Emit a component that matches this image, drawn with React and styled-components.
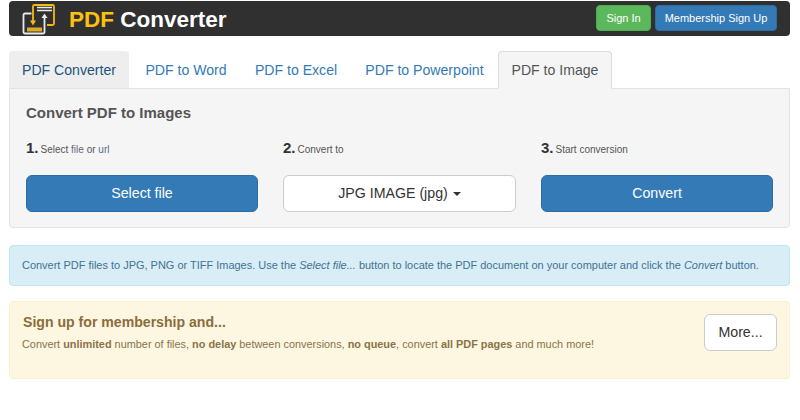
import React from "react";
import styled, { createGlobalStyle } from "styled-components";

const Global = createGlobalStyle`
  html, body { margin: 0; padding: 0; background: #fff; }
  body { font-family: "Liberation Sans", Arial, sans-serif; color: #333; }
  * { box-sizing: border-box; }
`;

const Page = styled.div`
  width: 800px;
  height: 420px;
  padding: 1px 10px 0 9px;
  overflow: hidden;
`;

const Header = styled.header`
  height: 35px;
  background: #303030;
  border-radius: 4px;
  display: flex;
  align-items: flex-start;
  justify-content: space-between;
  padding: 4px 13px 0 13px;
`;

const Brand = styled.div`
  display: flex;
  align-items: center;
  gap: 13px;
  height: 29px;
  font-size: 22.5px;
  font-weight: 700;
  color: #fff;
`;

const Accent = styled.span`
  color: #fdc010;
`;

const HeaderActions = styled.div`
  display: flex;
  gap: 4px;
`;

const HeaderButton = styled.button`
  height: 26px;
  width: ${(p) => p.$width}px;
  border-radius: 4px;
  border: 1px solid ${(p) => (p.$green ? "#4cae4c" : "#2e6da4")};
  background: ${(p) => (p.$green ? "#5cb85c" : "#337ab7")};
  color: #fff;
  font: 11px "Liberation Sans", Arial, sans-serif;
  padding: 0;
`;

const Tabs = styled.nav`
  display: flex;
  margin-top: 15px;
  height: 38px;
`;

const Tab = styled.a`
  height: ${(p) => (p.$active ? 38 : 37)}px;
  width: ${(p) => p.$width}px;
  margin-right: ${(p) => p.$gap}px;
  display: flex;
  align-items: center;
  justify-content: center;
  font-size: 14.1px;
  border-radius: 4px 4px 0 0;
  position: relative;
  z-index: 1;
  color: ${(p) => (p.$home ? "#23527c" : p.$active ? "#555" : "#337ab7")};
  background: ${(p) => (p.$home ? "#eee" : p.$active ? "#f5f5f5" : "transparent")};
  border: 1px solid ${(p) => (p.$active ? "#ddd" : "transparent")};
  border-bottom: ${(p) => (p.$active ? "1px solid #f5f5f5" : "none")};
`;

const Panel = styled.section`
  height: 140px;
  background: #f5f5f5;
  border: 1px solid #e3e3e3;
  border-radius: 0 0 4px 4px;
  margin-top: -1px;
  padding: 15px 16px 0;
`;

const PanelTitle = styled.h2`
  margin: 0;
  font-size: 15px;
  line-height: 18px;
  font-weight: 700;
  color: #555;
`;

const Steps = styled.div`
  display: grid;
  grid-template-columns: 232px 233px 232px;
  column-gap: 25px;
  margin-top: 17px;
`;

const Step = styled.div`
  display: flex;
  flex-direction: column;
`;

const StepLabel = styled.div`
  height: 22px;
  display: flex;
  align-items: baseline;
  font-size: 10px;
  color: #555;
  white-space: pre;
`;

const StepNum = styled.b`
  font-size: 15px;
  color: #333;
  margin-right: 2px;
`;

const LinkWord = styled.span`
  color: #5a6b82;
`;

const ActionButton = styled.button`
  margin-top: 14px;
  height: 37px;
  width: 100%;
  border-radius: 6px;
  border: 1px solid ${(p) => (p.$plain ? "#ccc" : "#2e6da4")};
  background: ${(p) => (p.$plain ? "#fff" : "#337ab7")};
  color: ${(p) => (p.$plain ? "#333" : "#fff")};
  font: 14.2px "Liberation Sans", Arial, sans-serif;
  padding: 0 0 2px;
`;

const Caret = styled.span`
  display: inline-block;
  margin-left: 5px;
  vertical-align: middle;
  border-top: 4px solid #333;
  border-left: 4px solid transparent;
  border-right: 4px solid transparent;
`;

const Info = styled.div`
  margin-top: 17px;
  height: 41px;
  background: #d9edf7;
  border: 1px solid #bce8f1;
  border-radius: 4px;
  color: #3f7390;
  font-size: 10.98px;
  line-height: 38px;
  padding: 0 0 0 12px;
  white-space: nowrap;
`;

const Promo = styled.div`
  margin-top: 15px;
  height: 78px;
  background: #fdf7e2;
  border: 1px solid #faf0d4;
  border-radius: 4px;
  color: #8a7348;
  display: flex;
  justify-content: space-between;
  align-items: flex-start;
  padding: 12px 12px 0 12px;
`;

const PromoText = styled.div`
  display: flex;
  flex-direction: column;
`;

const PromoTitle = styled.h3`
  margin: 0 0 0 1px;
  font-size: 14.1px;
  line-height: 16px;
  font-weight: 700;
  color: #8a6d3b;
`;

const PromoBody = styled.p`
  margin: 7px 0 0;
  font-size: 10.9px;
  line-height: 14px;
  white-space: nowrap;
`;

const MoreButton = styled.button`
  height: 37px;
  width: 73px;
  border-radius: 6px;
  border: 1px solid #ccc;
  background: #fff;
  color: #333;
  font: 14.2px "Liberation Sans", Arial, sans-serif;
  padding: 0 0 2px;
`;

const Logo = () => (
  <svg width="34" height="32" viewBox="0 0 34 32" fill="none">
    <path d="M9.5 9.5H3a1.5 1.5 0 0 0-1.5 1.5v17a1.5 1.5 0 0 0 1.5 1.5h18a1.5 1.5 0 0 0 1.5-1.5V12" stroke="#eaeaea" strokeWidth="1.8" />
    <path d="M11 17V2.5A1.5 1.5 0 0 1 12.5 1h18A1.5 1.5 0 0 1 32 2.5v17a1.5 1.5 0 0 1-1.5 1.5H25" stroke="#f5b914" strokeWidth="1.8" />
    <path d="M15 3.5h15M15 6.5h15" stroke="#eaeaea" strokeWidth="1.4" />
    <path d="M8 16.5h6L11 21.5z" fill="#f5b914" />
    <path d="M19.5 14l3-4.5 3 4.5z" fill="#eaeaea" />
    <rect x="5" y="23.5" width="15" height="4" fill="#d9ab26" />
  </svg>
);

export default function App() {
  return (
    <Page>
      <Global />
      <Header>
        <Brand>
          <Logo />
          <span><Accent>PDF</Accent> Converter</span>
        </Brand>
        <HeaderActions>
          <HeaderButton $green $width={55}>Sign In</HeaderButton>
          <HeaderButton $width={122}>Membership Sign Up</HeaderButton>
        </HeaderActions>
      </Header>

      <Tabs>
        <Tab $home $width={120} $gap={2}>PDF Converter</Tab>
        <Tab $width={110} $gap={0}>PDF to Word</Tab>
        <Tab $width={110} $gap={0}>PDF to Excel</Tab>
        <Tab $width={147} $gap={0}>PDF to Powerpoint</Tab>
        <Tab $active $width={114} $gap={0}>PDF to Image</Tab>
      </Tabs>

      <Panel>
        <PanelTitle>Convert PDF to Images</PanelTitle>
        <Steps>
          <Step>
            <StepLabel><StepNum>1.</StepNum>Select <LinkWord>file</LinkWord> or <LinkWord>url</LinkWord></StepLabel>
            <ActionButton>Select file</ActionButton>
          </Step>
          <Step>
            <StepLabel><StepNum>2.</StepNum>Convert to</StepLabel>
            <ActionButton $plain>JPG IMAGE (jpg)<Caret /></ActionButton>
          </Step>
          <Step>
            <StepLabel><StepNum>3.</StepNum>Start conversion</StepLabel>
            <ActionButton>Convert</ActionButton>
          </Step>
        </Steps>
      </Panel>

      <Info>
        Convert PDF files to JPG, PNG or TIFF Images. Use the <i>Select file...</i> button to locate the PDF document on your computer and click the <i>Convert</i> button.
      </Info>

      <Promo>
        <PromoText>
          <PromoTitle>Sign up for membership and...</PromoTitle>
          <PromoBody>
            Convert <b>unlimited</b> number of files, <b>no delay</b> between conversions, <b>no queue</b>, convert <b>all PDF pages</b> and much more!
          </PromoBody>
        </PromoText>
        <MoreButton>More...</MoreButton>
      </Promo>
    </Page>
  );
}
